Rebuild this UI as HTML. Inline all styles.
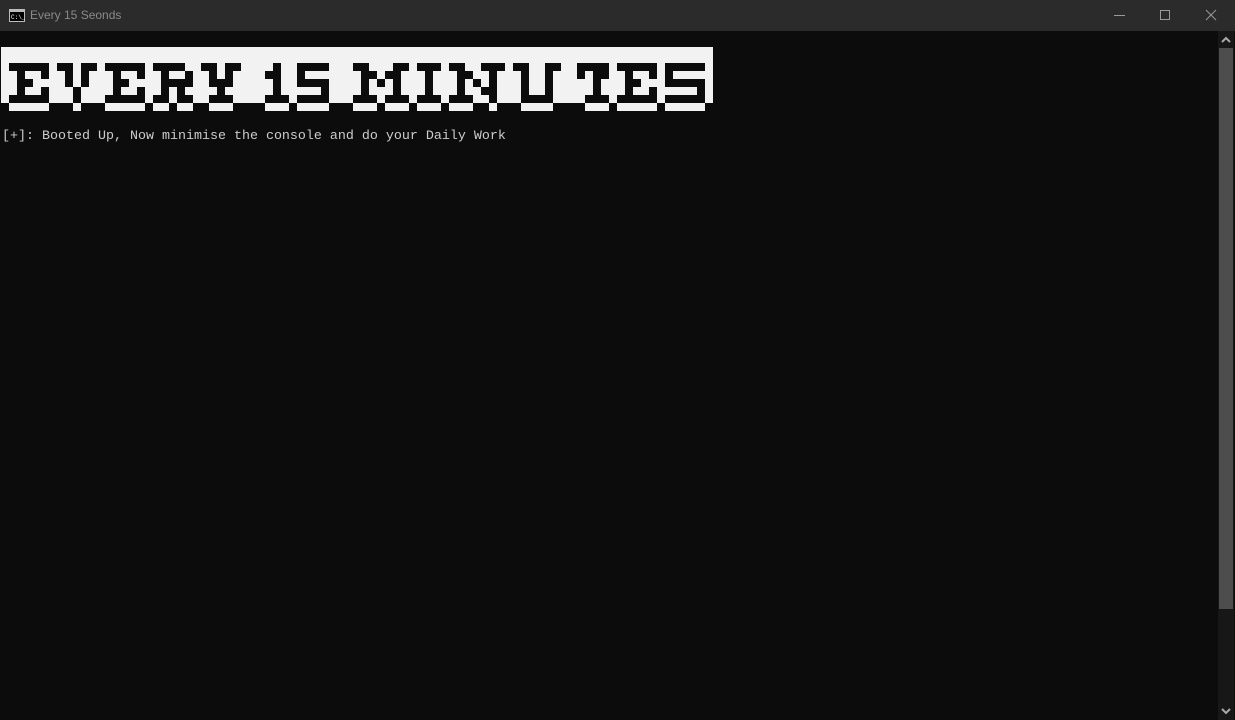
<!DOCTYPE html>
<html><head><meta charset="utf-8"><style>
html,body{margin:0;padding:0;width:1235px;height:720px;overflow:hidden;background:#0c0c0c;}
#tb{position:absolute;left:0;top:0;width:1235px;height:31px;background:#2b2b2b;}
#tt{position:absolute;left:30px;top:8px;font:12px "Liberation Sans",sans-serif;color:#8a8a8a;}
#sb{position:absolute;left:1218px;top:31px;width:16px;height:689px;background:#171717;}
#th{position:absolute;left:1219px;top:48px;width:14px;height:561px;background:#4d4d4d;}
#txt{position:absolute;left:2px;top:129px;font:13.33px "Liberation Mono",monospace;color:#cccccc;white-space:pre;}
</style></head><body>
<div id="tb">
<svg style="position:absolute;left:9px;top:9px" width="16" height="13"><rect x="0.5" y="0.5" width="15" height="12" fill="#000" stroke="#bbb"/><rect x="1" y="1" width="14" height="2" fill="#bbb"/><text x="2" y="10" font-size="6" fill="#fff" font-family="Liberation Mono">C:\_</text></svg>
<div id="tt">Every 15 Seonds</div>
<svg style="position:absolute;left:1110px;top:5px" width="125" height="22" stroke="#9a9a9a" fill="none" stroke-width="1">
<line x1="4" y1="10.5" x2="15" y2="10.5"/>
<rect x="50.5" y="5.5" width="9" height="9"/>
<line x1="96" y1="5" x2="106" y2="15"/><line x1="106" y1="5" x2="96" y2="15"/>
</svg>
</div>
<div id="sb"></div>
<div id="th"></div>
<svg style="position:absolute;left:1220px;top:35px" width="12" height="10"><path d="M2 7 L6 3 L10 7" stroke="#aaa" stroke-width="2" fill="none"/></svg>
<svg style="position:absolute;left:1220px;top:706px" width="12" height="10"><path d="M2 3 L6 7 L10 3" stroke="#aaa" stroke-width="2" fill="none"/></svg>
<svg id="ban" style="position:absolute;left:0;top:0" width="720" height="120"></svg>
<div id="txt">[+]: Booted Up, Now minimise the console and do your Daily Work</div>
<script>
var L={
E:[[1,2,3,4,5],[2,5],[2,3],[2,5],[1,2,3,4,5],[1,2,3,4,5]],
V:[[7,8,10,11],[8,10],[8,10],[9],[9],[9]],
E2:[[13,14,15,16,17],[14,17],[14,15],[14,17],[13,14,15,16,17],[13,14,15,16,17]],
R:[[19,20,21,22],[20,23],[20,21,22,23],[20,22],[19,20,22,23],[19,20,22,23]],
Y:[[25,26,28,29],[26,28],[26,27,28],[27],[26,27,28],[26,27,28]],
O:[[34],[33,34],[34],[34],[33,34,35],[33,34,35]],
F:[[37,38,39,40],[37],[37,38,39,40],[40],[37,38,39,40],[37,38,39,40]],
M:[[44,45,49,50],[45,46,48,49],[45,47,49],[45,49],[44,45,46,48,49,50],[44,45,46,48,49,50]],
I:[[52,53,54],[53],[53],[53],[52,53,54],[52,53,54]],
N:[[56,57,60,61,62],[57,58,61],[57,59,61],[57,60,61],[56,57,58,61],[56,57,58,61]],
U:[[64,65,68,69],[65,68],[65,68],[65,68],[65,66,67,68],[65,66,67,68]],
T:[[72,73,74,75],[72,74,75],[74],[74],[73,74,75],[73,74,75]],
E3:[[77,78,79,80,81],[78,81],[78,79],[78,81],[77,78,79,80,81],[77,78,79,80,81]],
S:[[83,84,85,86,87],[83],[83,84,85,86,87],[87],[83,84,85,86,87],[83,84,85,86,87]]};
var s='<rect x="1" y="47" width="712" height="56" fill="#f2f2f2"/>';
for(var k in L){var g=L[k];for(var r=0;r<6;r++){g[r].forEach(function(c){
 var y=63+r*8;s+='<rect x="'+(1+c*8)+'" y="'+y+'" width="8" height="8" fill="'+(r<5?'#0c0c0c':'#f2f2f2')+'"/>';});}}
document.getElementById('ban').innerHTML=s;
</script>
</body></html>
